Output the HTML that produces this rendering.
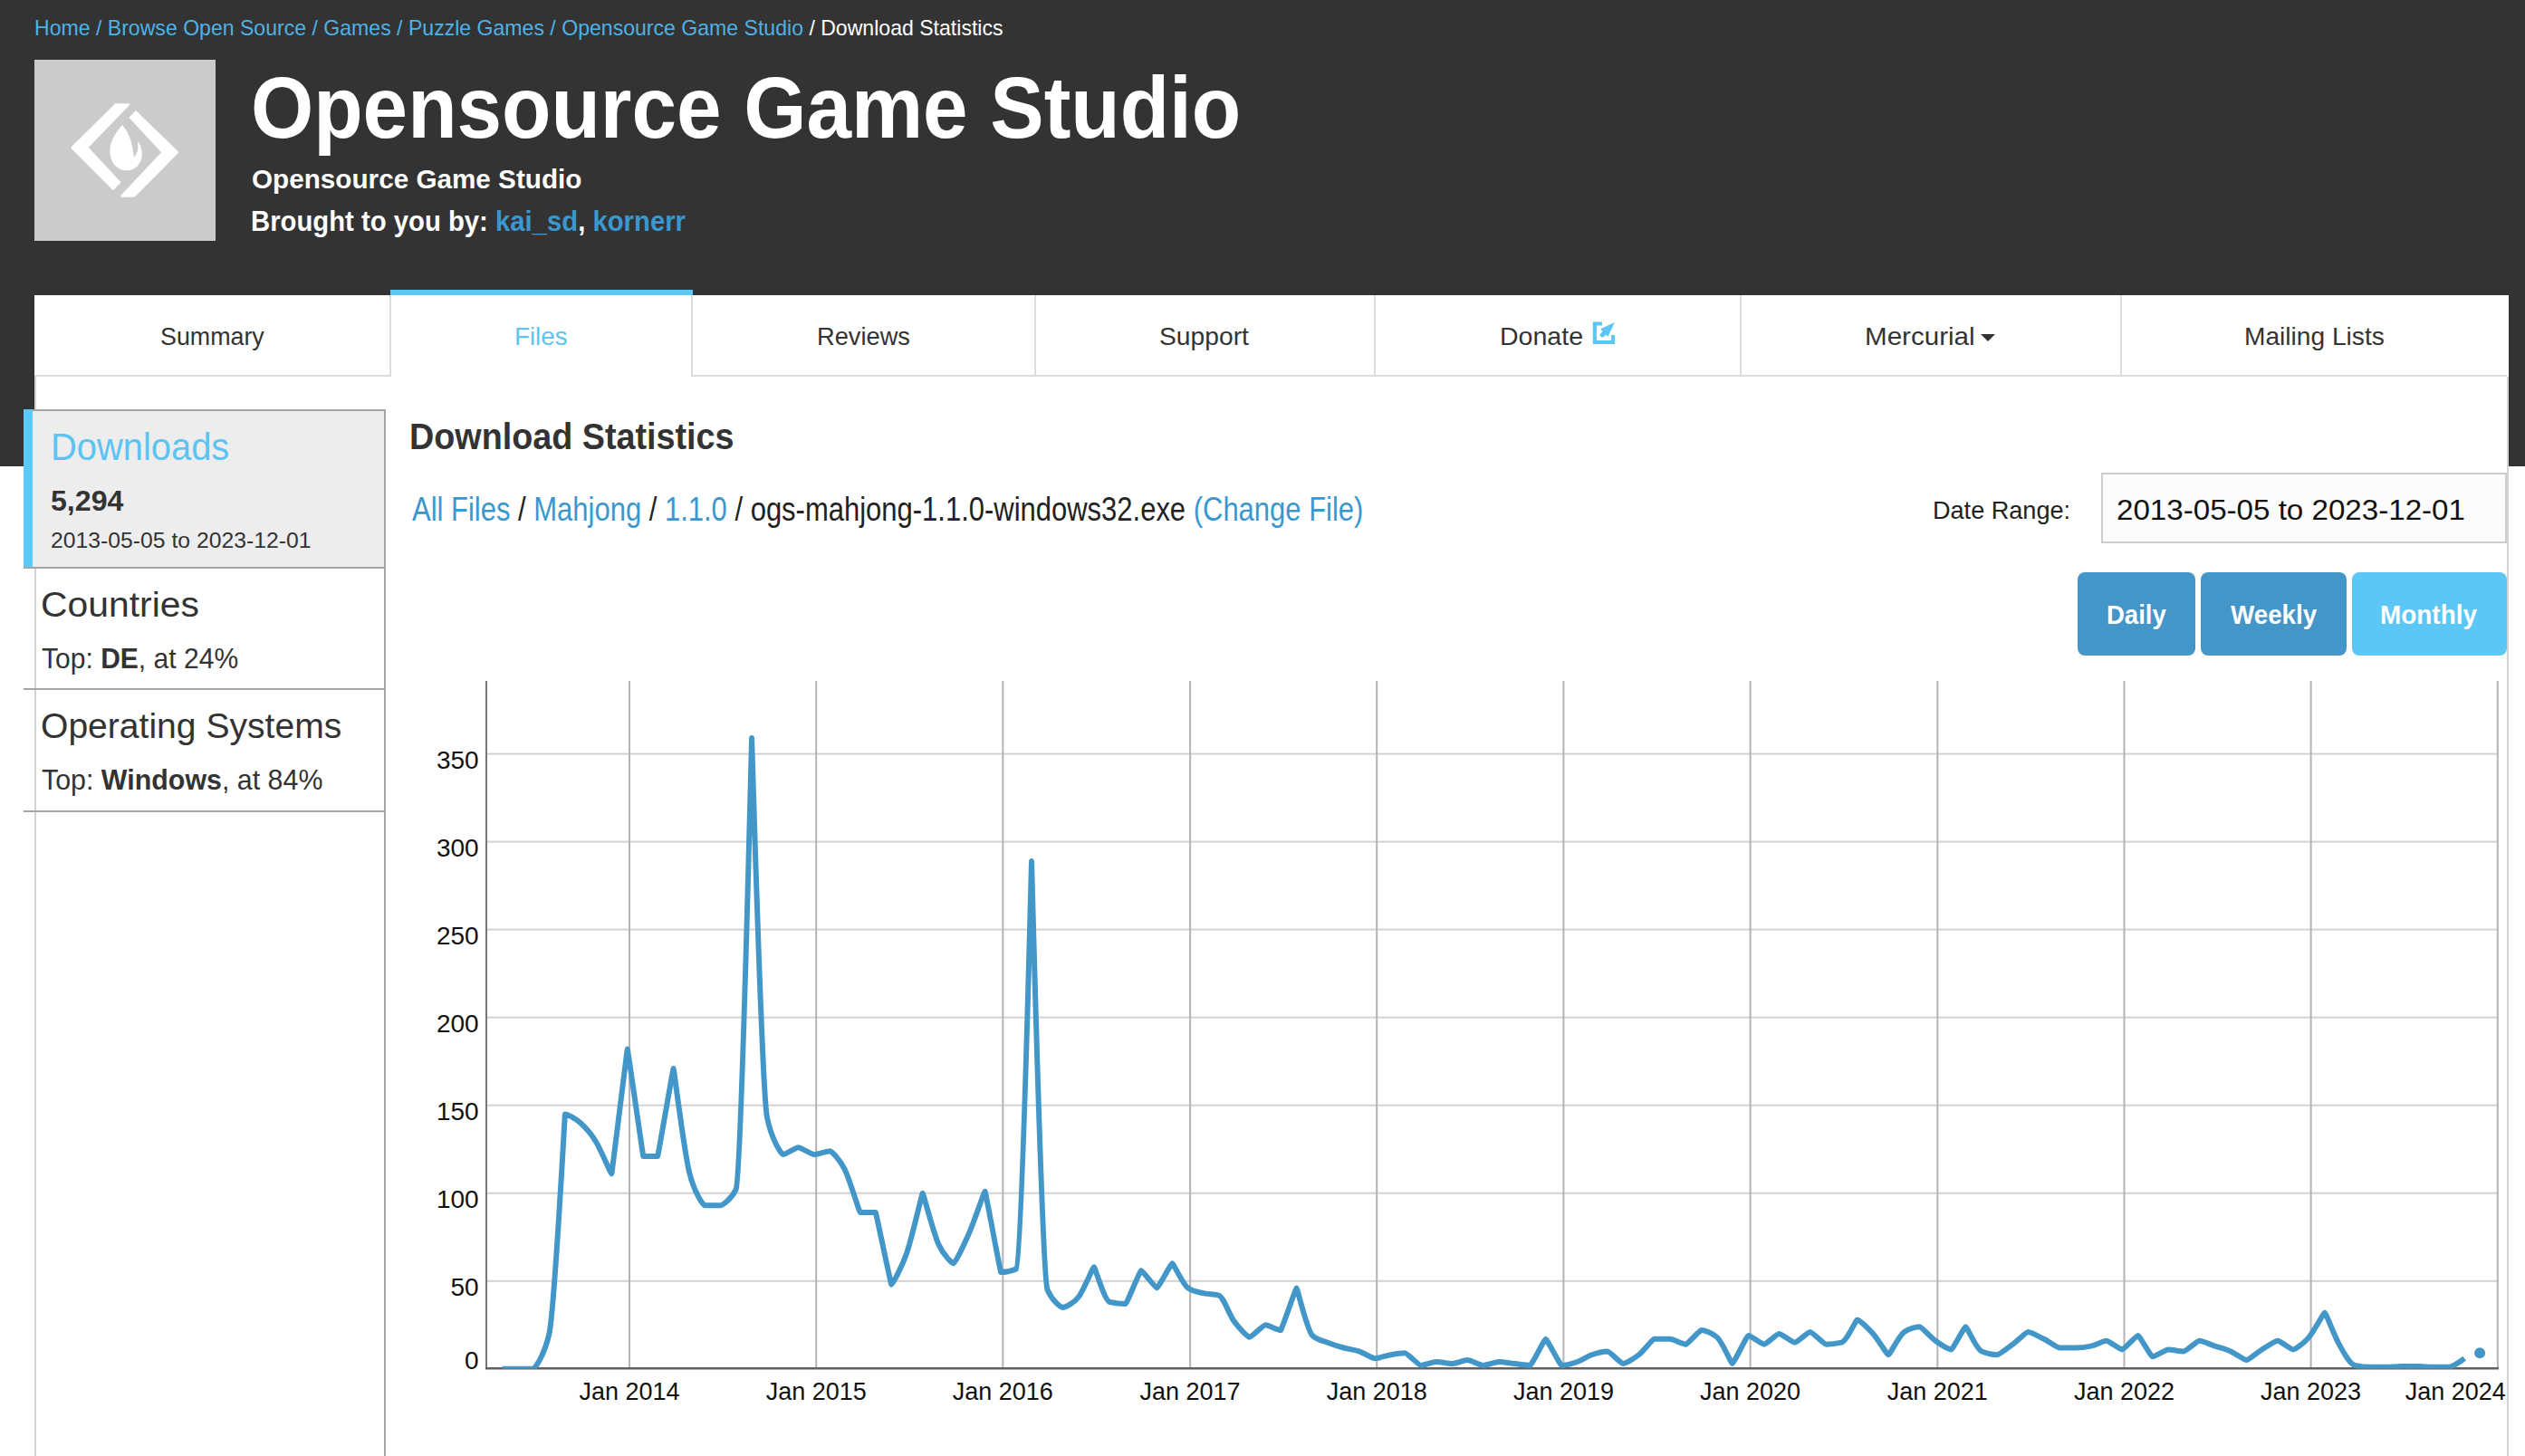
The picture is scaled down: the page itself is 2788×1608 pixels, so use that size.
<!DOCTYPE html>
<html><head><meta charset="utf-8"><style>
html,body{margin:0;padding:0;}
body{width:2788px;height:1608px;overflow:hidden;position:relative;background:#fff;font-family:'Liberation Sans', sans-serif;}
.a{position:absolute;}
.t{position:absolute;white-space:nowrap;line-height:1;transform-origin:0 0;}
</style></head><body>

<div class="a" style="left:0;top:0;width:2788px;height:515px;background:#333"></div>
<div class="a" style="left:38px;top:66px;width:200px;height:200px;background:#cbcbcb">
<svg width="200" height="200" viewBox="0 0 1456 1456" style="position:absolute;left:0;top:0">
<path fill="#fff" d="M650,352 L758,352 Q772,356 762,368 L435,705 L695,985 L640,1045 Q632,1050 625,1043 L298,715 Q292,705 298,698 Z"/>
<path fill="#fff" d="M815,408 L1155,738 Q1162,745 1155,752 L810,1100 Q805,1105 795,1105 L700,1105 Q688,1100 695,1090 L1020,745 L760,465 Z"/>
<path fill="#fff" d="M705,525 C660,580 605,650 607,740 C609,830 670,890 738,890 C815,890 865,830 865,760 C865,715 850,675 830,655 C838,700 830,760 800,785 C790,700 775,600 705,525 Z"/>
</svg></div>
<div class="a" style="left:38px;top:326px;width:2732px;height:90px;background:#fff"></div>
<div class="a" style="left:38px;top:414px;width:2730px;height:2px;background:#dcdcdc"></div>
<div class="a" style="left:430px;top:326px;width:2px;height:90px;background:#dcdcdc"></div>
<div class="a" style="left:763px;top:326px;width:2px;height:90px;background:#dcdcdc"></div>
<div class="a" style="left:1142px;top:326px;width:2px;height:90px;background:#dcdcdc"></div>
<div class="a" style="left:1517px;top:326px;width:2px;height:90px;background:#dcdcdc"></div>
<div class="a" style="left:1921px;top:326px;width:2px;height:90px;background:#dcdcdc"></div>
<div class="a" style="left:2341px;top:326px;width:2px;height:90px;background:#dcdcdc"></div>
<div class="a" style="left:431px;top:320px;width:334px;height:6px;background:#5bc8f5"></div>
<div class="a" style="left:432px;top:412px;width:331px;height:6px;background:#fff"></div>
<div class="a" style="left:38px;top:416px;width:2732px;height:1192px;background:#fff"></div>
<div class="a" style="left:38px;top:416px;width:2px;height:1192px;background:#d4d4d4"></div>
<div class="a" style="left:2768px;top:416px;width:2px;height:1192px;background:#d4d4d4"></div>
<div class="a" style="left:2770px;top:416px;width:18px;height:99px;background:#333"></div>
<div class="a" style="left:26px;top:452px;width:400px;height:176px;background:#ededed"></div>
<div class="a" style="left:26px;top:452px;width:10px;height:176px;background:#5bc8f8"></div>
<div class="a" style="left:36px;top:452px;width:390px;height:2px;background:#a4a4a4"></div>
<div class="a" style="left:26px;top:626px;width:400px;height:2px;background:#a4a4a4"></div>
<div class="a" style="left:26px;top:760px;width:400px;height:2px;background:#a4a4a4"></div>
<div class="a" style="left:26px;top:895px;width:400px;height:2px;background:#a4a4a4"></div>
<div class="a" style="left:424px;top:452px;width:2px;height:1156px;background:#a4a4a4"></div>
<div class="a" style="left:2320px;top:522px;width:444px;height:74px;border:2px solid #cdcdcd;background:#fcfcfc"></div>
<div class="a" style="left:2294px;top:632px;width:130px;height:92px;border-radius:8px;background:#4496c8"></div>
<div class="a" style="left:2430px;top:632px;width:161px;height:92px;border-radius:8px;background:#4496c8"></div>
<div class="a" style="left:2597px;top:632px;width:171px;height:92px;border-radius:8px;background:#5cc6f7"></div>
<div class="t" style="left:37.98px;top:18.68px;font-size:24px;font-weight:400;color:#fff;transform:scaleX(0.9614)"><span style="color:#4eb1e6">Home / Browse Open Source / Games / Puzzle Games / Opensource Game Studio</span> / Download Statistics</div>
<div class="t" style="left:277.29px;top:71.44px;font-size:96px;font-weight:700;color:#fff;transform:scaleX(0.9273)">Opensource Game Studio</div>
<div class="t" style="left:278.01px;top:183.10px;font-size:30px;font-weight:700;color:#fff;transform:scaleX(0.9891)">Opensource Game Studio</div>
<div class="t" style="left:277.17px;top:227.81px;font-size:32px;font-weight:700;color:#fff;transform:scaleX(0.9151)">Brought to you by: <span style="color:#3b97cf">kai_sd</span>, <span style="color:#3b97cf">kornerr</span></div>
<div class="t" style="left:177.04px;top:357.60px;font-size:28px;font-weight:400;color:#333;transform:scaleX(0.9580)">Summary</div>
<div class="t" style="left:568.32px;top:357.60px;font-size:28px;font-weight:400;color:#5bc4f2;transform:scaleX(0.9911)">Files</div>
<div class="t" style="left:902.05px;top:357.60px;font-size:28px;font-weight:400;color:#333;transform:scaleX(0.9728)">Reviews</div>
<div class="t" style="left:1280.39px;top:357.60px;font-size:28px;font-weight:400;color:#333;transform:scaleX(1.0082)">Support</div>
<div class="t" style="left:1655.56px;top:357.60px;font-size:28px;font-weight:400;color:#333;transform:scaleX(1.0195)">Donate</div>
<div class="t" style="left:2059.09px;top:357.60px;font-size:28px;font-weight:400;color:#333;transform:scaleX(1.0559)">Mercurial</div>
<div class="t" style="left:2478.19px;top:357.60px;font-size:28px;font-weight:400;color:#333;transform:scaleX(1.0046)">Mailing Lists</div>
<div class="t" style="left:56.15px;top:472.95px;font-size:42px;font-weight:400;color:#5bc4f2;transform:scaleX(0.9493)">Downloads</div>
<div class="t" style="left:56.00px;top:536.91px;font-size:32px;font-weight:700;color:#333;transform:scaleX(1.0038)">5,294</div>
<div class="t" style="left:55.97px;top:584.68px;font-size:24px;font-weight:400;color:#333;transform:scaleX(1.0307)">2013-05-05 to 2023-12-01</div>
<div class="t" style="left:44.85px;top:648.53px;font-size:38px;font-weight:400;color:#333;transform:scaleX(1.0755)">Countries</div>
<div class="t" style="left:46.06px;top:710.91px;font-size:32px;font-weight:400;color:#333;transform:scaleX(0.9389)">Top: <b>DE</b>, at 24%</div>
<div class="t" style="left:44.94px;top:782.83px;font-size:38px;font-weight:400;color:#333;transform:scaleX(1.0281)">Operating Systems</div>
<div class="t" style="left:46.05px;top:845.41px;font-size:32px;font-weight:400;color:#333;transform:scaleX(0.9495)">Top: <b>Windows</b>, at 84%</div>
<div class="t" style="left:452.47px;top:461.94px;font-size:40px;font-weight:700;color:#333;transform:scaleX(0.9432)">Download Statistics</div>
<div class="t" style="left:455.00px;top:544.53px;font-size:36px;font-weight:400;color:#222;transform:scaleX(0.8605)"><span style="color:#3b97cf">All Files</span> / <span style="color:#3b97cf">Mahjong</span> / <span style="color:#3b97cf">1.1.0</span> / ogs-mahjong-1.1.0-windows32.exe <span style="color:#3b97cf">(Change File)</span></div>
<div class="t" style="left:2134.07px;top:549.90px;font-size:28px;font-weight:400;color:#222;transform:scaleX(0.9673)">Date Range:</div>
<div class="t" style="left:2336.93px;top:546.91px;font-size:32px;font-weight:400;color:#111;transform:scaleX(1.0353)">2013-05-05 to 2023-12-01</div>
<div class="t" style="left:2325.60px;top:664.85px;font-size:29px;font-weight:700;color:#fff;transform:scaleX(0.9478)">Daily</div>
<div class="t" style="left:2463.00px;top:664.85px;font-size:29px;font-weight:700;color:#fff;transform:scaleX(0.9576)">Weekly</div>
<div class="t" style="left:2628.08px;top:664.85px;font-size:29px;font-weight:700;color:#fff;transform:scaleX(0.9624)">Monthly</div>
<svg class="a" style="left:1750px;top:345px" width="40" height="40" viewBox="0 0 40 40">
<path fill="#5bc5f5" d="M8.8,10.6 H19 V14.6 H12.9 V31 H29.1 V25.1 H33.1 V35 H8.8 Z"/>
<path fill="#5bc5f5" d="M32.8,11 L25.5,26.8 L23.2,24.7 L19.2,27.9 L16.1,24.9 L19.5,21 L17.2,18.3 Z"/>
</svg>
<svg class="a" style="left:2186px;top:368px" width="18" height="10" viewBox="0 0 18 10"><path fill="#333" d="M1,1 H17 L9,9 Z"/></svg>
<svg class="a" style="left:0;top:0" width="2788" height="1608" viewBox="0 0 2788 1608">
<defs><clipPath id="cp"><rect x="537" y="700" width="2222" height="811.5"/></clipPath></defs>
<rect x="538" y="1413.8" width="2220" height="2" fill="#d2d2d2"/>
<rect x="538" y="1316.7" width="2220" height="2" fill="#d2d2d2"/>
<rect x="538" y="1219.7" width="2220" height="2" fill="#d2d2d2"/>
<rect x="538" y="1122.7" width="2220" height="2" fill="#d2d2d2"/>
<rect x="538" y="1025.6" width="2220" height="2" fill="#d2d2d2"/>
<rect x="538" y="928.6" width="2220" height="2" fill="#d2d2d2"/>
<rect x="538" y="831.6" width="2220" height="2" fill="#d2d2d2"/>
<rect x="694.0" y="752" width="2" height="760" fill="#b4b4b4"/>
<rect x="900.2" y="752" width="2" height="760" fill="#b4b4b4"/>
<rect x="1106.3" y="752" width="2" height="760" fill="#b4b4b4"/>
<rect x="1313.1" y="752" width="2" height="760" fill="#b4b4b4"/>
<rect x="1519.2" y="752" width="2" height="760" fill="#b4b4b4"/>
<rect x="1725.4" y="752" width="2" height="760" fill="#b4b4b4"/>
<rect x="1931.6" y="752" width="2" height="760" fill="#b4b4b4"/>
<rect x="2138.3" y="752" width="2" height="760" fill="#b4b4b4"/>
<rect x="2344.5" y="752" width="2" height="760" fill="#b4b4b4"/>
<rect x="2550.6" y="752" width="2" height="760" fill="#b4b4b4"/>
<rect x="2756.8" y="752" width="2" height="760" fill="#b4b4b4"/>
<rect x="536" y="752" width="2" height="760" fill="#777"/>
<rect x="536" y="1510" width="2223" height="2.5" fill="#606060"/>
<path clip-path="url(#cp)" d="M554.41,1511.80C560.25,1511.80 566.09,1511.80 571.92,1511.80C577.57,1511.80 583.22,1511.80 588.87,1511.80C589.94,1511.80 600.54,1498.86 606.38,1472.99C612.22,1447.11 623.69,1230.40 623.89,1230.40C626.52,1230.40 635.19,1235.07 640.83,1240.10C646.67,1245.30 652.51,1251.84 658.34,1261.45C663.99,1270.75 674.19,1296.38 675.29,1296.38C675.64,1296.38 692.45,1158.59 692.80,1158.59C693.20,1158.59 709.91,1276.98 710.31,1276.98C715.58,1276.98 720.85,1276.98 726.13,1276.98C726.61,1276.98 743.15,1179.94 743.64,1179.94C744.03,1179.94 754.93,1267.46 760.58,1292.50C766.42,1318.38 777.02,1331.31 778.09,1331.31C783.74,1331.31 789.39,1331.31 795.04,1331.31C796.99,1331.31 806.71,1325.49 812.55,1313.85C818.38,1302.20 829.96,815.09 830.06,815.09C830.17,815.09 841.35,1207.99 847.00,1234.28C852.84,1261.45 863.48,1275.03 864.51,1275.03C867.46,1275.03 878.51,1267.27 881.46,1267.27C884.55,1267.27 895.87,1275.03 898.97,1275.03C903.01,1275.03 912.43,1271.15 916.48,1271.15C918.00,1271.15 927.02,1280.23 932.29,1290.56C938.13,1302.00 948.91,1339.08 949.80,1339.08C955.45,1339.08 961.10,1339.08 966.75,1339.08C967.33,1339.08 983.68,1418.65 984.26,1418.65C985.36,1418.65 995.55,1400.10 1001.20,1383.71C1007.04,1366.78 1018.03,1317.73 1018.71,1317.73C1019.50,1317.73 1030.39,1361.05 1036.22,1374.01C1041.87,1386.56 1051.56,1395.36 1053.17,1395.36C1054.34,1395.36 1064.84,1373.97 1070.68,1360.43C1076.33,1347.32 1086.72,1315.79 1087.62,1315.79C1088.15,1315.79 1104.61,1405.06 1105.13,1405.06C1109.18,1405.06 1116.81,1403.77 1122.64,1401.18C1128.10,1398.76 1138.93,950.94 1139.02,950.94C1139.13,950.94 1150.70,1411.10 1156.53,1424.47C1162.18,1437.41 1171.76,1443.88 1173.48,1443.88C1175.98,1443.88 1185.15,1439.92 1190.99,1432.23C1196.64,1424.80 1206.78,1399.24 1207.94,1399.24C1209.01,1399.24 1219.61,1436.76 1225.45,1438.05C1231.28,1439.35 1238.18,1439.99 1242.96,1439.99C1244.01,1439.99 1258.85,1403.12 1259.90,1403.12C1261.72,1403.12 1275.60,1422.53 1277.41,1422.53C1278.75,1422.53 1293.01,1395.36 1294.36,1395.36C1295.78,1395.36 1306.03,1418.65 1311.87,1422.53C1317.70,1426.41 1323.54,1427.05 1329.38,1428.35C1334.65,1429.52 1339.92,1429.00 1345.19,1430.29C1351.03,1431.72 1356.86,1451.57 1362.70,1459.40C1368.35,1466.98 1377.80,1476.87 1379.65,1476.87C1381.93,1476.87 1394.87,1463.28 1397.16,1463.28C1400.50,1463.28 1410.75,1469.10 1414.10,1469.10C1415.03,1469.10 1430.69,1422.53 1431.61,1422.53C1432.45,1422.53 1443.29,1469.58 1449.12,1474.93C1454.77,1480.10 1460.42,1480.45 1466.07,1482.69C1471.90,1485.00 1477.74,1486.88 1483.58,1488.51C1489.23,1490.09 1494.87,1490.50 1500.52,1492.39C1506.36,1494.35 1514.94,1500.16 1518.03,1500.16C1522.08,1500.16 1529.71,1497.26 1535.54,1496.27C1540.81,1495.38 1547.13,1494.33 1551.36,1494.33C1553.65,1494.33 1566.58,1507.92 1568.87,1507.92C1572.74,1507.92 1581.94,1504.04 1585.81,1504.04C1590.59,1504.04 1598.55,1505.98 1603.32,1505.98C1607.20,1505.98 1616.40,1502.10 1620.27,1502.10C1623.77,1502.10 1634.27,1507.92 1637.78,1507.92C1641.82,1507.92 1651.25,1504.04 1655.29,1504.04C1659.89,1504.04 1666.59,1505.34 1672.23,1505.98C1678.07,1506.64 1684.97,1507.92 1689.74,1507.92C1691.02,1507.92 1705.42,1478.81 1706.69,1478.81C1708.04,1478.81 1722.85,1507.92 1724.20,1507.92C1728.24,1507.92 1735.87,1506.16 1741.71,1504.04C1746.98,1502.12 1752.25,1498.19 1757.53,1496.27C1763.36,1494.16 1770.99,1492.39 1775.04,1492.39C1777.21,1492.39 1789.81,1505.98 1791.98,1505.98C1794.75,1505.98 1803.65,1500.92 1809.49,1496.27C1815.14,1491.78 1824.59,1478.81 1826.44,1478.81C1832.27,1478.81 1838.11,1478.81 1843.95,1478.81C1847.45,1478.81 1857.95,1484.63 1861.46,1484.63C1863.45,1484.63 1876.41,1469.10 1878.40,1469.10C1881.50,1469.10 1890.08,1471.69 1895.91,1476.87C1901.56,1481.88 1911.58,1505.98 1912.86,1505.98C1914.14,1505.98 1929.08,1474.93 1930.37,1474.93C1933.14,1474.93 1945.11,1484.63 1947.88,1484.63C1950.13,1484.63 1962.00,1472.99 1964.26,1472.99C1967.03,1472.99 1979.00,1482.69 1981.77,1482.69C1984.15,1482.69 1996.33,1471.05 1998.71,1471.05C2001.00,1471.05 2013.94,1484.63 2016.22,1484.63C2020.82,1484.63 2027.52,1483.98 2033.17,1482.69C2039.00,1481.35 2049.17,1457.46 2050.68,1457.46C2052.78,1457.46 2062.35,1466.36 2068.19,1472.99C2073.84,1479.39 2083.63,1496.27 2085.13,1496.27C2086.64,1496.27 2096.81,1475.06 2102.64,1471.05C2108.29,1467.16 2116.24,1465.22 2119.59,1465.22C2121.69,1465.22 2131.26,1476.54 2137.10,1480.75C2142.94,1484.95 2151.84,1490.45 2154.61,1490.45C2155.87,1490.45 2169.17,1465.22 2170.42,1465.22C2171.85,1465.22 2182.10,1489.72 2187.93,1492.39C2193.58,1494.98 2201.01,1496.27 2204.88,1496.27C2207.38,1496.27 2216.55,1488.92 2222.39,1484.63C2228.04,1480.48 2237.17,1471.05 2239.34,1471.05C2242.43,1471.05 2251.01,1475.90 2256.85,1478.81C2262.68,1481.72 2271.59,1488.51 2274.36,1488.51C2280.00,1488.51 2285.65,1488.51 2291.30,1488.51C2296.08,1488.51 2302.97,1487.86 2308.81,1486.57C2314.46,1485.32 2322.41,1480.75 2325.76,1480.75C2328.52,1480.75 2340.50,1490.45 2343.27,1490.45C2345.37,1490.45 2358.67,1474.93 2360.78,1474.93C2362.11,1474.93 2375.26,1498.22 2376.59,1498.22C2379.69,1498.22 2391.01,1490.45 2394.10,1490.45C2398.70,1490.45 2406.45,1492.39 2411.05,1492.39C2413.55,1492.39 2426.05,1480.75 2428.56,1480.75C2431.90,1480.75 2439.85,1484.66 2445.50,1486.57C2451.34,1488.54 2457.18,1489.81 2463.01,1492.39C2468.85,1494.98 2477.75,1502.10 2480.52,1502.10C2482.90,1502.10 2491.82,1493.96 2497.47,1490.45C2503.30,1486.82 2512.21,1480.75 2514.98,1480.75C2517.61,1480.75 2529.29,1490.45 2531.92,1490.45C2534.21,1490.45 2543.60,1483.66 2549.43,1476.87C2555.27,1470.07 2565.52,1449.70 2566.94,1449.70C2567.92,1449.70 2577.49,1475.18 2582.76,1484.63C2588.60,1495.09 2594.43,1506.58 2600.27,1507.92C2605.92,1509.21 2612.62,1509.86 2617.21,1509.86C2623.05,1509.86 2628.89,1509.86 2634.72,1509.86C2639.79,1509.86 2646.60,1508.89 2651.67,1508.89C2657.51,1508.89 2663.34,1508.89 2669.18,1508.89C2674.43,1508.89 2681.44,1509.86 2686.69,1509.86C2692.34,1509.86 2697.99,1509.86 2703.63,1509.86C2706.40,1509.86 2715.31,1505.01 2721.14,1500.16" fill="none" stroke="#4297c8" stroke-width="6" stroke-miterlimit="10" stroke-linejoin="round"/>
<circle cx="2738.1" cy="1494.3" r="6" fill="#4297c8"/>
<text x="528.6" y="1511.8" text-anchor="end" font-family="Liberation Sans" font-size="28" fill="#111">0</text>
<text x="528.6" y="1430.8" text-anchor="end" font-family="Liberation Sans" font-size="28" fill="#111">50</text>
<text x="528.6" y="1333.7" text-anchor="end" font-family="Liberation Sans" font-size="28" fill="#111">100</text>
<text x="528.6" y="1236.7" text-anchor="end" font-family="Liberation Sans" font-size="28" fill="#111">150</text>
<text x="528.6" y="1139.7" text-anchor="end" font-family="Liberation Sans" font-size="28" fill="#111">200</text>
<text x="528.6" y="1042.6" text-anchor="end" font-family="Liberation Sans" font-size="28" fill="#111">250</text>
<text x="528.6" y="945.6" text-anchor="end" font-family="Liberation Sans" font-size="28" fill="#111">300</text>
<text x="528.6" y="848.6" text-anchor="end" font-family="Liberation Sans" font-size="28" fill="#111">350</text>
<text x="639.5" y="1546" font-family="Liberation Sans" font-size="28" fill="#111" textLength="111" lengthAdjust="spacingAndGlyphs">Jan 2014</text>
<text x="845.7" y="1546" font-family="Liberation Sans" font-size="28" fill="#111" textLength="111" lengthAdjust="spacingAndGlyphs">Jan 2015</text>
<text x="1051.8" y="1546" font-family="Liberation Sans" font-size="28" fill="#111" textLength="111" lengthAdjust="spacingAndGlyphs">Jan 2016</text>
<text x="1258.6" y="1546" font-family="Liberation Sans" font-size="28" fill="#111" textLength="111" lengthAdjust="spacingAndGlyphs">Jan 2017</text>
<text x="1464.7" y="1546" font-family="Liberation Sans" font-size="28" fill="#111" textLength="111" lengthAdjust="spacingAndGlyphs">Jan 2018</text>
<text x="1670.9" y="1546" font-family="Liberation Sans" font-size="28" fill="#111" textLength="111" lengthAdjust="spacingAndGlyphs">Jan 2019</text>
<text x="1877.1" y="1546" font-family="Liberation Sans" font-size="28" fill="#111" textLength="111" lengthAdjust="spacingAndGlyphs">Jan 2020</text>
<text x="2083.8" y="1546" font-family="Liberation Sans" font-size="28" fill="#111" textLength="111" lengthAdjust="spacingAndGlyphs">Jan 2021</text>
<text x="2290.0" y="1546" font-family="Liberation Sans" font-size="28" fill="#111" textLength="111" lengthAdjust="spacingAndGlyphs">Jan 2022</text>
<text x="2496.1" y="1546" font-family="Liberation Sans" font-size="28" fill="#111" textLength="111" lengthAdjust="spacingAndGlyphs">Jan 2023</text>
<text x="2766.8" y="1546" text-anchor="end" font-family="Liberation Sans" font-size="28" fill="#111" textLength="111" lengthAdjust="spacingAndGlyphs">Jan 2024</text>
</svg>
</body></html>
